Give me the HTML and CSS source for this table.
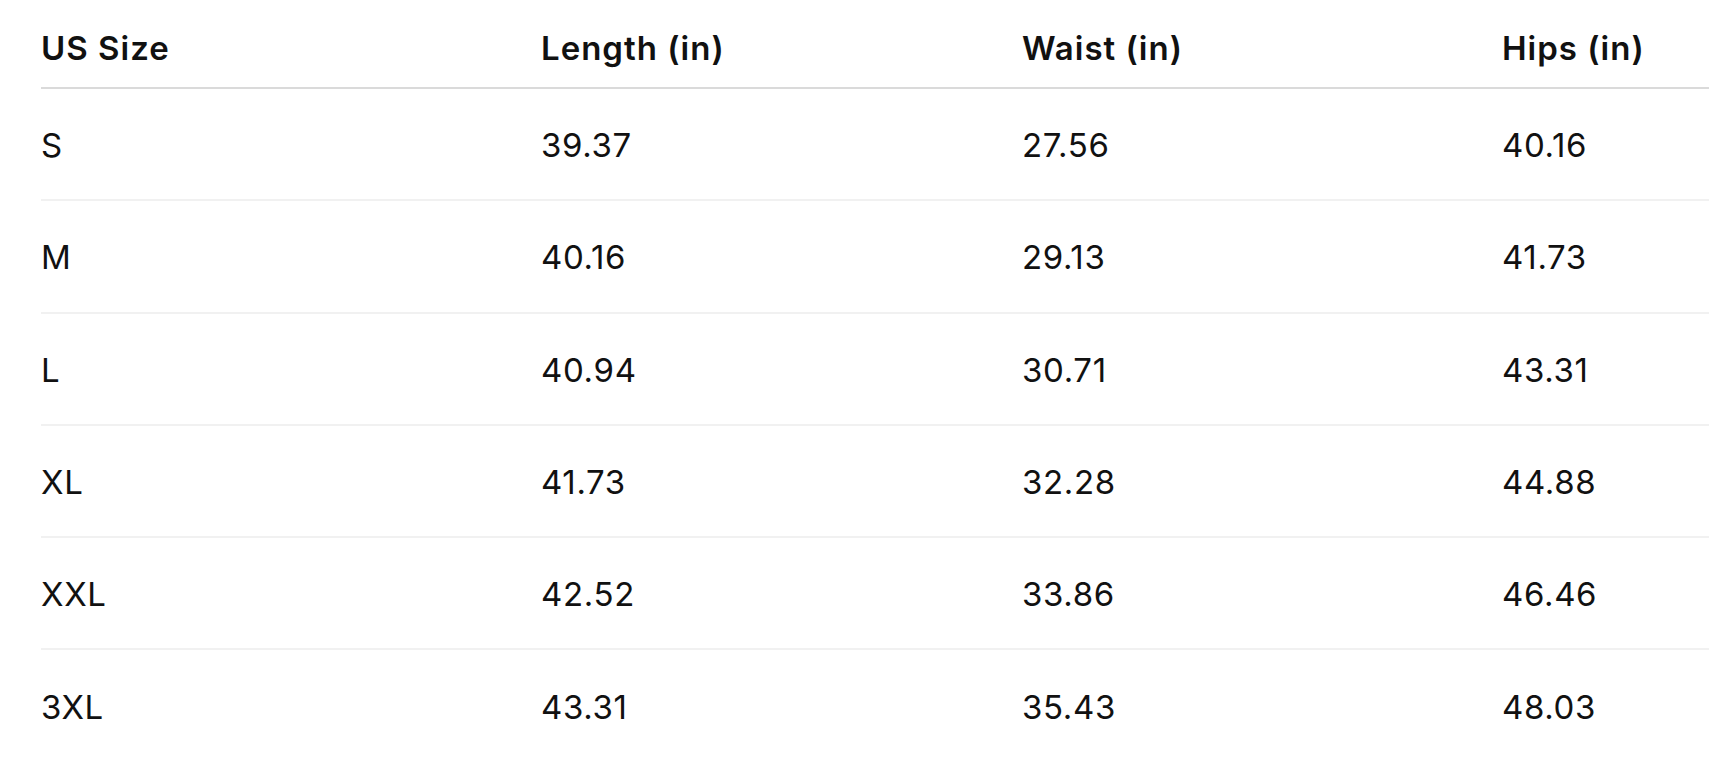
FILE: index.html
```html
<!DOCTYPE html>
<html lang="en">
<head>
<meta charset="utf-8">
<title>Size Chart</title>
<link rel="stylesheet" href="styles.css">
</head>
<body>
<div class="wrap">
  <table class="size-table">
    <colgroup>
      <col class="c1"><col class="c2"><col class="c3"><col class="c4">
    </colgroup>
    <thead>
      <tr><th>US Size</th><th>Length (in)</th><th>Waist (in)</th><th>Hips (in)</th></tr>
    </thead>
    <tbody>
      <tr><td>S</td><td>39.37</td><td>27.56</td><td>40.16</td></tr>
      <tr><td>M</td><td>40.16</td><td>29.13</td><td>41.73</td></tr>
      <tr><td>L</td><td>40.94</td><td>30.71</td><td>43.31</td></tr>
      <tr><td>XL</td><td>41.73</td><td>32.28</td><td>44.88</td></tr>
      <tr><td>XXL</td><td>42.52</td><td>33.86</td><td>46.46</td></tr>
      <tr><td>3XL</td><td>43.31</td><td>35.43</td><td>48.03</td></tr>
    </tbody>
  </table>
</div>
</body>
</html>
```

FILE: styles.css
```css
html, body {
  margin: 0;
  padding: 0;
  background: #fff;
  overflow: hidden;
}
.wrap {
  padding-left: 41px;
  width: 2100px;
}
.size-table {
  border-collapse: separate;
  border-spacing: 0;
  table-layout: fixed;
  width: 1941px;
  font-family: Inter, "Noto Sans", sans-serif;
  font-size: 33px;
  line-height: 38px;
  color: #111;
  text-align: left;
}
.c1 { width: 500px; }
.c2 { width: 481px; }
.c3 { width: 480px; }
.c4 { width: 480px; }
.size-table th {
  font-weight: 600;
  letter-spacing: 1px;
  padding: 29px 0 20px 0;
  border-bottom: 2px solid #dadada;
}
.size-table td {
  font-weight: 400;
  letter-spacing: 0.65px;
  padding: 37.2px 0 35.1px 0;
  border-bottom: 2px solid #f1f1f1;
}
.size-table tbody tr:last-child td {
  border-bottom: none;
}
```
